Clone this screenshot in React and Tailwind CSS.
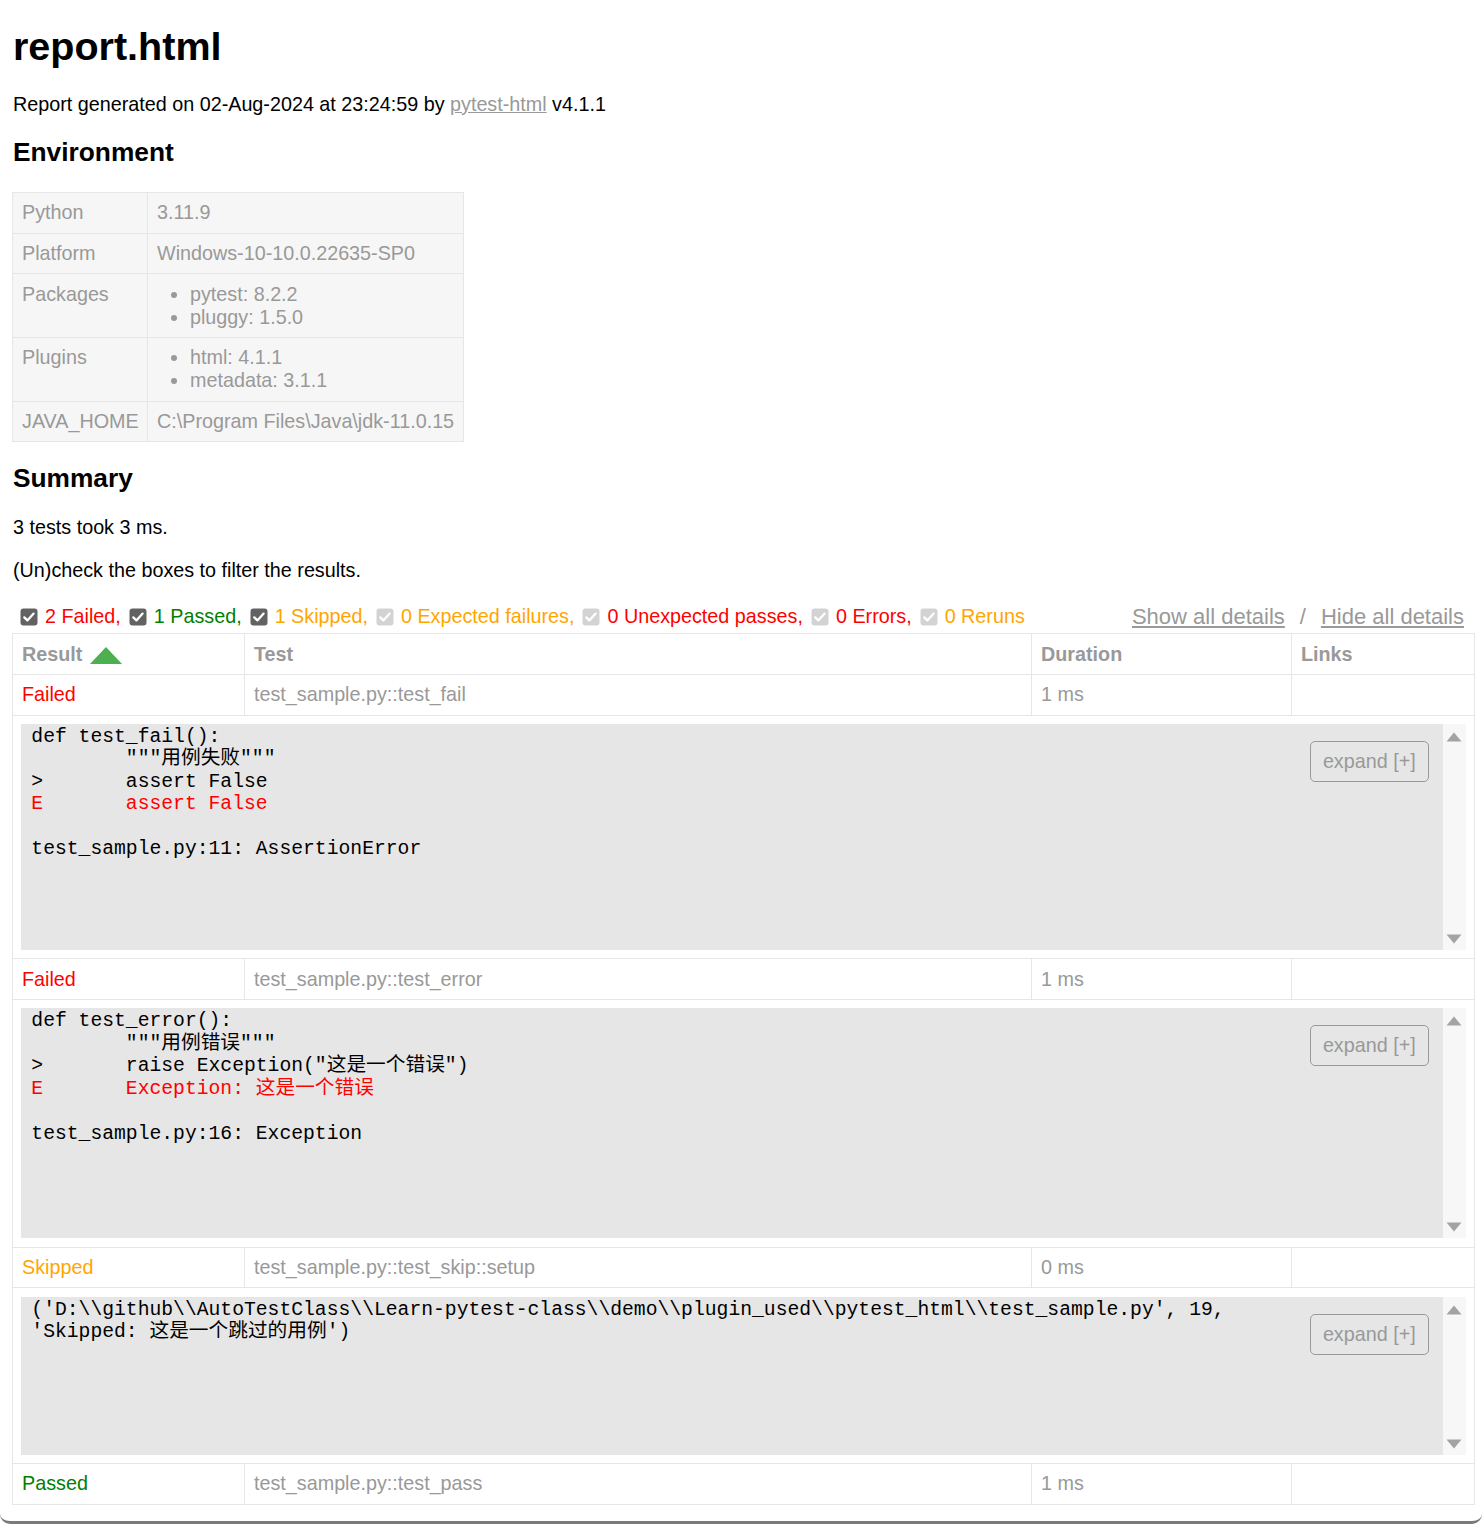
import React from "react";

function Box({ on }) {
  return (
    <svg width="18" height="18" viewBox="0 0 18 18" className="shrink-0">
      <rect x="0.5" y="0.5" width="17" height="17" rx="3" fill={on ? "#626262" : "#d3d3d3"} />
      <path d="M4.3 9.4 L7.4 12.4 L13.6 5.6" fill="none" stroke="#ffffff" strokeWidth="2.3" strokeLinecap="round" strokeLinejoin="round" />
    </svg>
  );
}

function Filter({ on, color, label, last, first }) {
  return (
    <div className={"flex items-center " + (first ? "ml-[7px]" : "ml-[8px]")}>
      <Box on={on} />
      <span className={"ml-[7px] " + color}>{label}{last ? "" : ","}</span>
    </div>
  );
}

function Up() {
  return (
    <svg width="16" height="10" viewBox="0 0 16 10">
      <path d="M8 0.5 L15.5 9.5 L0.5 9.5 Z" fill="#a3a3a3" />
    </svg>
  );
}
function Down() {
  return (
    <svg width="16" height="10" viewBox="0 0 16 10">
      <path d="M0.5 0.5 L15.5 0.5 L8 9.5 Z" fill="#a3a3a3" />
    </svg>
  );
}

function Log({ h, children }) {
  return (
    <div className="flex" style={{ height: h }}>
      <div className="relative flex-1 bg-[#e6e6e6] overflow-hidden">
        <pre className="pt-[2px] pl-[10px] whitespace-pre font-['Liberation_Mono','Noto_Sans_CJK_SC',monospace] text-[19.7px] leading-[22.5px] text-black">
          {children}
        </pre>
        <div className="absolute top-[17px] right-[14px] h-[41px] px-[12px] border border-[#999] rounded-[5px] text-[19.75px] leading-[23px] text-[#999] flex items-center bg-[#e6e6e6]">
          expand [+]
        </div>
      </div>
      <div className="w-[23px] bg-[#f7f7f7] flex flex-col items-center justify-between pt-[8px] pb-[6px]">
        <Up />
        <Down />
      </div>
    </div>
  );
}

function ResultRow({ result, color, test, dur }) {
  const td = "border border-[#e6e6e6] px-[9px] py-[8.33px] text-left align-top";
  return (
    <tr>
      <td className={td + " " + color}>{result}</td>
      <td className={td}>{test}</td>
      <td className={td}>{dur}</td>
      <td className={td}></td>
    </tr>
  );
}

function ExtraRow({ h, children }) {
  return (
    <tr>
      <td colSpan={4} className="border border-[#e6e6e6] px-[8.33px] py-[8.33px]">
        <Log h={h}>{children}</Log>
      </td>
    </tr>
  );
}

export default function App() {
  const etd = "border border-[#e6e6e6] px-[9px] py-[8.33px] align-top";
  const R = ({ children }) => <span className="text-[#ff0000]">{children}</span>;
  return (
    <div className="relative min-h-[1524px] bg-white font-['Liberation_Sans',Arial,'Noto_Sans_CJK_SC',sans-serif] text-[19.75px] leading-[23px] text-[#999] pl-[12px] pr-[8px] pt-[23px]">
      <h1 className="text-[39.5px] leading-[46px] font-bold text-black pl-[1px]">report.html</h1>
      <p className="mt-[24px] text-black pl-[1px]">
        Report generated on 02-Aug-2024 at 23:24:59 by{" "}
        <span className="text-[#999] underline">pytest-html</span> v4.1.1
      </p>
      <h2 className="mt-[21px] text-[26.3px] leading-[31px] font-bold text-black pl-[1px]">Environment</h2>
      <table className="mt-[24px] table-fixed w-[451px]">
        <colgroup>
          <col className="w-[135px]" />
          <col className="w-[316px]" />
        </colgroup>
        <tbody>
          <tr className="bg-[#f6f6f6]">
            <td className={etd}>Python</td>
            <td className={etd}>3.11.9</td>
          </tr>
          <tr className="bg-[#f6f6f6]">
            <td className={etd}>Platform</td>
            <td className={etd}>Windows-10-10.0.22635-SP0</td>
          </tr>
          <tr className="bg-[#f6f6f6]">
            <td className={etd}>Packages</td>
            <td className={etd}>
              <ul className="list-disc pl-[33px]">
                <li>pytest: 8.2.2</li>
                <li>pluggy: 1.5.0</li>
              </ul>
            </td>
          </tr>
          <tr className="bg-[#f6f6f6]">
            <td className={etd}>Plugins</td>
            <td className={etd}>
              <ul className="list-disc pl-[33px]">
                <li>html: 4.1.1</li>
                <li>metadata: 3.1.1</li>
              </ul>
            </td>
          </tr>
          <tr className="bg-[#f6f6f6]">
            <td className={etd + " whitespace-nowrap"}>JAVA_HOME</td>
            <td className={etd + " whitespace-nowrap"}>C:\Program Files\Java\jdk-11.0.15</td>
          </tr>
        </tbody>
      </table>
      <h2 className="mt-[21px] text-[26.3px] leading-[31px] font-bold text-black pl-[1px]">Summary</h2>
      <p className="mt-[22px] text-black pl-[1px]">3 tests took 3 ms.</p>
      <p className="mt-[20px] text-black pl-[1px]">(Un)check the boxes to filter the results.</p>
      <div className="mt-[20px] h-[29px] flex items-center justify-between pl-[1px]">
        <div className="flex items-center">
          <Filter on first color="text-[#ff0000]" label="2 Failed" />
          <Filter on color="text-[#008000]" label="1 Passed" />
          <Filter on color="text-[#ffa500]" label="1 Skipped" />
          <Filter color="text-[#ffa500]" label="0 Expected failures" />
          <Filter color="text-[#ff0000]" label="0 Unexpected passes" />
          <Filter color="text-[#ff0000]" label="0 Errors" />
          <Filter color="text-[#ffa500]" label="0 Reruns" last />
        </div>
        <div className="flex items-center text-[22px] leading-[25px] text-[#999]">
          <span className="px-[10px] underline">Show all details</span>
          <span className="px-[5px]">/</span>
          <span className="px-[10px] underline">Hide all details</span>
        </div>
      </div>
      <table className="mt-[2px] table-fixed w-[1462px] border border-[#e6e6e6]">
        <colgroup>
          <col className="w-[232px]" />
          <col className="w-[787px]" />
          <col className="w-[260px]" />
          <col className="w-[183px]" />
        </colgroup>
        <thead>
          <tr>
            <th className="border border-[#e6e6e6] px-[9px] py-[8.33px] text-left font-bold">
              <span className="inline-flex items-end">
                Result
                <svg width="32" height="17" viewBox="0 0 32 17" className="ml-[8px] mb-[2px]">
                  <path d="M16 0 L32 17 L0 17 Z" fill="#4caf50" />
                </svg>
              </span>
            </th>
            <th className="border border-[#e6e6e6] px-[9px] py-[8.33px] text-left font-bold">Test</th>
            <th className="border border-[#e6e6e6] px-[9px] py-[8.33px] text-left font-bold">Duration</th>
            <th className="border border-[#e6e6e6] px-[9px] py-[8.33px] text-left font-bold">Links</th>
          </tr>
        </thead>
        <tbody>
          <ResultRow result="Failed" color="text-[#ff0000]" test="test_sample.py::test_fail" dur="1 ms" />
          <ExtraRow h={226}>
            {"def test_fail():\n        \"\"\"用例失败\"\"\"\n>       assert False\n"}
            <R>{"E       assert False"}</R>
            {"\n\ntest_sample.py:11: AssertionError"}
          </ExtraRow>
          <ResultRow result="Failed" color="text-[#ff0000]" test="test_sample.py::test_error" dur="1 ms" />
          <ExtraRow h={230}>
            {"def test_error():\n        \"\"\"用例错误\"\"\"\n>       raise Exception(\"这是一个错误\")\n"}
            <R>{"E       Exception: 这是一个错误"}</R>
            {"\n\ntest_sample.py:16: Exception"}
          </ExtraRow>
          <ResultRow result="Skipped" color="text-[#ffa500]" test="test_sample.py::test_skip::setup" dur="0 ms" />
          <ExtraRow h={158}>
            {"('D:\\\\github\\\\AutoTestClass\\\\Learn-pytest-class\\\\demo\\\\plugin_used\\\\pytest_html\\\\test_sample.py', 19,\n'Skipped: 这是一个跳过的用例')"}
          </ExtraRow>
          <ResultRow result="Passed" color="text-[#008000]" test="test_sample.py::test_pass" dur="1 ms" />
        </tbody>
      </table>
      <div className="absolute left-0 right-0 bottom-0 h-[12px] border-b-[3px] border-[#7a7a7a] rounded-b-[10px]"></div>
    </div>
  );
}
